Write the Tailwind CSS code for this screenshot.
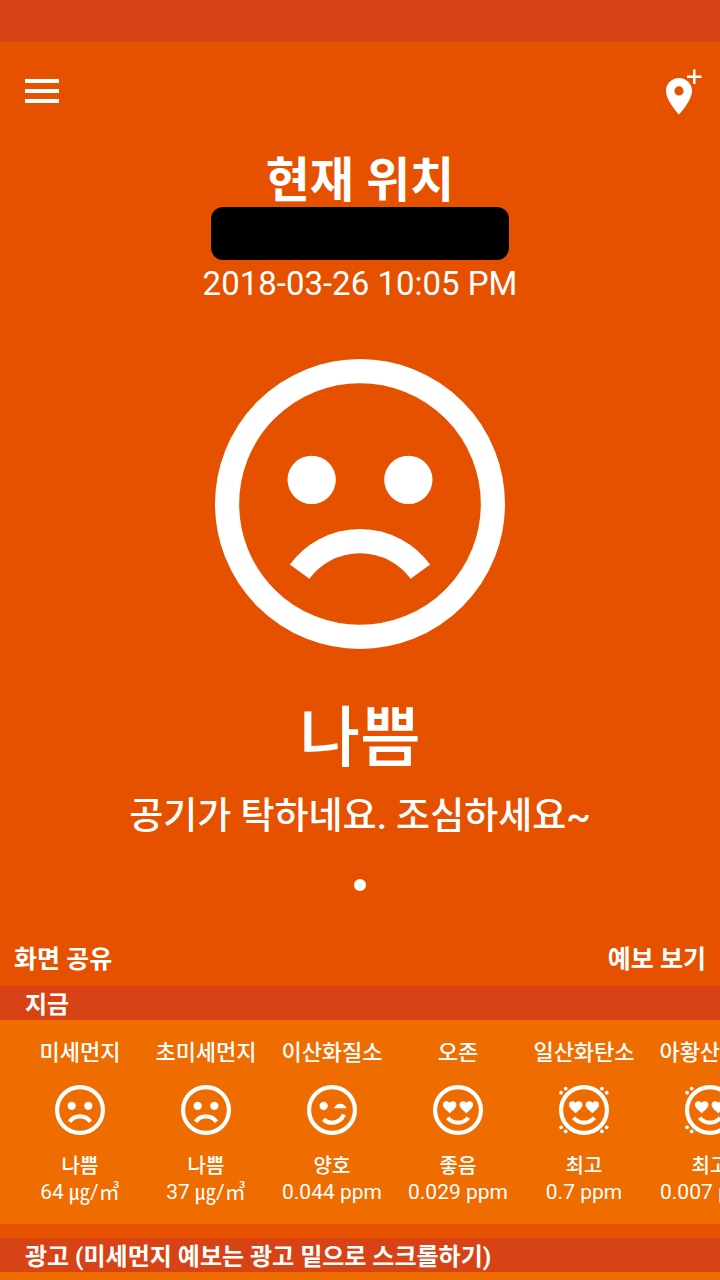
<!DOCTYPE html>
<html lang="ko">
<head>
<meta charset="utf-8">
<meta name="viewport" content="width=device-width, initial-scale=1">
<title>미세먼지</title>
<script src="https://cdn.jsdelivr.net/npm/@tailwindcss/browser@4"></script>
</head>
<body class="flex min-h-screen flex-col overflow-x-hidden bg-[#e65100] font-['Roboto','Noto_Sans_CJK_KR',sans-serif] text-white">
<svg class="hidden" aria-hidden="true">
  <symbol id="bad" viewBox="0 0 24 24">
    <circle cx="12" cy="12" r="11" fill="none" stroke="currentColor" stroke-width="2"/>
    <circle cx="8" cy="10" r="2" fill="currentColor"/><circle cx="16" cy="10" r="2" fill="currentColor"/>
    <path d="M7 17.6A6.2 6.2 0 0 1 17 17.6" fill="none" stroke="currentColor" stroke-width="2"/>
  </symbol>
  <symbol id="wink" viewBox="0 0 24 24">
    <circle cx="12" cy="12" r="11" fill="none" stroke="currentColor" stroke-width="2"/>
    <circle cx="8" cy="10" r="2" fill="currentColor"/>
    <path d="M13 11.2C13.800 8.400 17.800 8.200 19 11.200Z" fill="currentColor"/>
    <path d="M7.900 16.500A6.100 6.100 0 0 0 17.700 14.200" fill="none" stroke="currentColor" stroke-width="2"/>
  </symbol>
  <symbol id="love" viewBox="0 0 24 24">
    <circle cx="12" cy="12" r="11" fill="none" stroke="currentColor" stroke-width="2"/>
    <path d="M8 13.2C6.600 11.900 5 10.800 5 9.600C5 7.800 7.200 7.500 8 9C8.800 7.500 11 7.800 11 9.600C11 10.800 9.400 11.900 8 13.200Z M16 13.200C14.600 11.900 13 10.800 13 9.600C13 7.800 15.200 7.500 16 9C16.800 7.500 19 7.800 19 9.600C19 10.800 17.400 11.900 16 13.200Z" fill="currentColor" stroke="currentColor" stroke-width=".5"/>
    <path d="M7 15.700A6.500 6.500 0 0 0 17 15.700" fill="none" stroke="currentColor" stroke-width="2"/>
  </symbol>
  <symbol id="best" viewBox="0 0 24 24">
    <use href="#love" width="24" height="24"/>
    <g fill="currentColor">
      <circle cx="1" cy="3.700" r=".9"/><circle cx="3.200" cy="1.700" r=".9"/>
      <circle cx="20.600" cy="1.700" r=".9"/><circle cx="22.900" cy="3.700" r=".9"/>
      <circle cx="1" cy="20.300" r=".9"/><circle cx="3.200" cy="22.300" r=".9"/>
      <circle cx="20.600" cy="22.300" r=".9"/><circle cx="22.900" cy="20.300" r=".9"/>
    </g>
  </symbol>
</svg>

<div class="h-[42px] shrink-0 bg-[#d84315]"></div>

<header class="flex h-[98px] shrink-0 items-center justify-between pr-[18px] pl-[25px]">
  <button type="button" aria-label="메뉴">
    <svg class="block h-[26px] w-[34px]" viewBox="0 0 34 26" fill="currentColor"><path d="M0 1h34v4H0zM0 11h34v4H0zM0 21h34v4H0z"/></svg>
  </button>
  <button type="button" aria-label="위치 추가">
    <svg class="block h-[50px] w-[40px]" viewBox="0 0 40 50" fill="currentColor">
      <path fill-rule="evenodd" d="M17 12C9.800 12 4 17.700 4 24.900C4 34.500 17 48.500 17 48.500S30 34.500 30 24.900C30 17.700 24.200 12 17 12ZM17 29.500a4.600 4.600 0 1 1 0-9.200a4.600 4.600 0 0 1 0 9.200Z"/>
      <path d="M25 9.500h14.500v2.500H25zM31 3.500h2.500v14.500H31z"/>
    </svg>
  </button>
</header>

<main class="flex grow flex-col">
  <section class="flex flex-col items-center pt-[14px] text-center">
    <h1 class="text-[48px] leading-[53px] font-bold">현재 위치</h1>
    <div class="h-[53px] w-[298px] rounded-xl bg-black"></div>
    <time datetime="2018-03-26T22:05" class="text-[33px] leading-[48px]">2018-03-26 10:05 PM</time>
    <svg class="mt-[51px] size-[290px]" role="img" aria-label="나쁨"><use href="#bad"/></svg>
    <p class="mt-[46px] text-[66px] leading-[88px] font-medium">나쁨</p>
    <p class="mt-[6px] text-[37px] leading-[56px] font-medium">공기가 탁하네요. 조심하세요~</p>
    <span class="mt-[34px] size-3 rounded-full bg-white"></span>
  </section>

  <div class="mt-[42px] flex h-[53px] items-center justify-between px-[14px] text-[25px] font-bold">
    <button type="button">화면 공유</button>
    <button type="button">예보 보기</button>
  </div>

  <h2 class="bg-[#d84315] px-[25px] pt-1 text-[24px] leading-[30px] font-bold">지금</h2>
  <ul class="flex overflow-x-auto bg-[#ef6c00] pt-[17px] pr-4 pb-[19px] pl-[17px] text-center text-[21px] leading-[26px] [scrollbar-width:none]">
    <li class="flex w-[126px] shrink-0 flex-col items-center whitespace-nowrap">
      <h3 class="text-[22px] leading-[32px] font-medium">미세먼지</h3>
      <svg class="mt-4 mb-[18px] size-[50px]" aria-hidden="true"><use href="#bad"/></svg>
      <p class="text-[20px] font-medium">나쁨</p><p>64 ㎍/㎥</p>
    </li>
    <li class="flex w-[126px] shrink-0 flex-col items-center whitespace-nowrap">
      <h3 class="text-[22px] leading-[32px] font-medium">초미세먼지</h3>
      <svg class="mt-4 mb-[18px] size-[50px]" aria-hidden="true"><use href="#bad"/></svg>
      <p class="text-[20px] font-medium">나쁨</p><p>37 ㎍/㎥</p>
    </li>
    <li class="flex w-[126px] shrink-0 flex-col items-center whitespace-nowrap">
      <h3 class="text-[22px] leading-[32px] font-medium">이산화질소</h3>
      <svg class="mt-4 mb-[18px] size-[50px]" aria-hidden="true"><use href="#wink"/></svg>
      <p class="text-[20px] font-medium">양호</p><p>0.044 ppm</p>
    </li>
    <li class="flex w-[126px] shrink-0 flex-col items-center whitespace-nowrap">
      <h3 class="text-[22px] leading-[32px] font-medium">오존</h3>
      <svg class="mt-4 mb-[18px] size-[50px]" aria-hidden="true"><use href="#love"/></svg>
      <p class="text-[20px] font-medium">좋음</p><p>0.029 ppm</p>
    </li>
    <li class="flex w-[126px] shrink-0 flex-col items-center whitespace-nowrap">
      <h3 class="text-[22px] leading-[32px] font-medium">일산화탄소</h3>
      <svg class="mt-4 mb-[18px] size-[50px]" aria-hidden="true"><use href="#best"/></svg>
      <p class="text-[20px] font-medium">최고</p><p>0.7 ppm</p>
    </li>
    <li class="flex w-[126px] shrink-0 flex-col items-center whitespace-nowrap">
      <h3 class="text-[22px] leading-[32px] font-medium">아황산가스</h3>
      <svg class="mt-4 mb-[18px] size-[50px]" aria-hidden="true"><use href="#best"/></svg>
      <p class="text-[20px] font-medium">최고</p><p>0.007 ppm</p>
    </li>
  </ul>

  <h2 class="mt-[14px] bg-[#d84315] px-[25px] pt-1 text-[24px] leading-[30px] font-bold">광고 (미세먼지 예보는 광고 밑으로 스크롤하기)</h2>
  <div class="min-h-2 grow bg-[#ef6c00]"></div>
</main>
</body>
</html>
